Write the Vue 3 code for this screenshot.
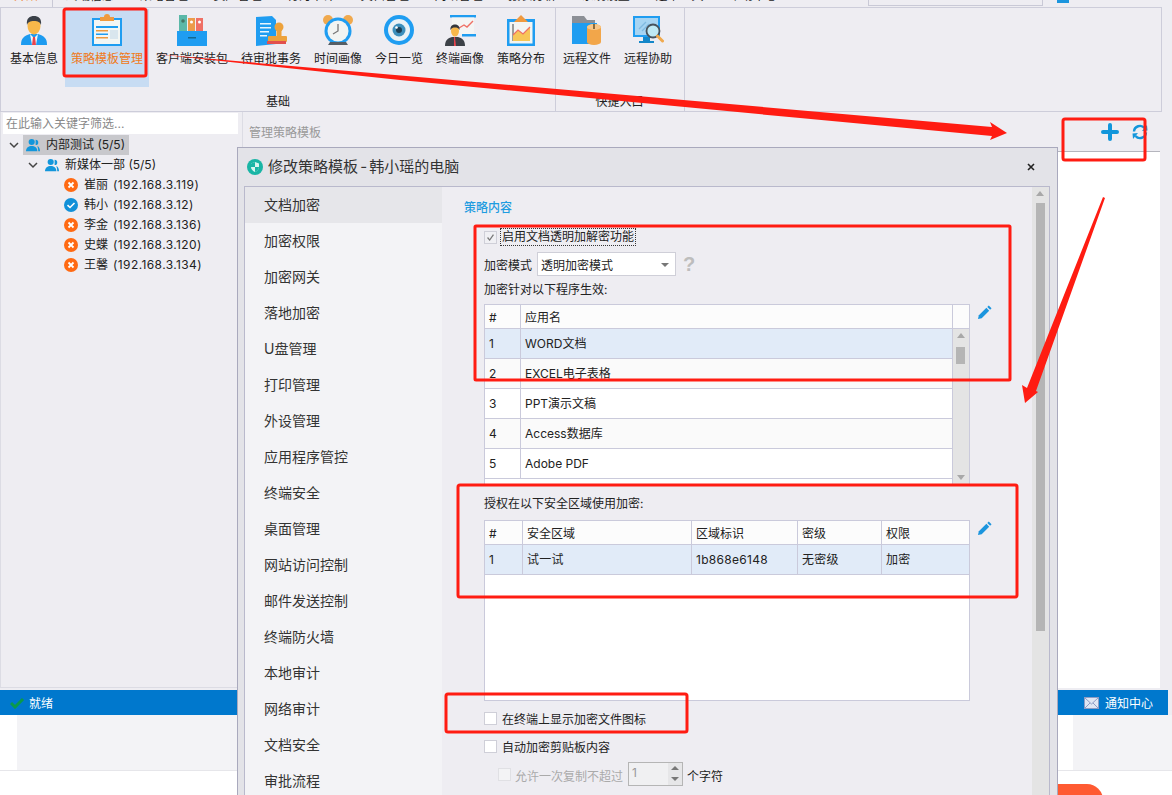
<script setup>
const tabs = ['终端信息', '策略管理', '资产管理', '行为审计', '文档管理', '网络管理', '报表分析', '系统设置', '运维工具', '帮助中心']
const groups = [
  {
    label: '基础', width: 555,
    items: [
      { t: '基本信息', i: 'person' }, { t: '策略模板管理', i: 'clip', active: true },
      { t: '客户端安装包', i: 'box' }, { t: '待审批事务', i: 'stamp' },
      { t: '时间画像', i: 'clock' }, { t: '今日一览', i: 'eye' },
      { t: '终端画像', i: 'present' }, { t: '策略分布', i: 'chart' }
    ]
  },
  {
    label: '快捷入口', width: 129,
    items: [{ t: '远程文件', i: 'folder' }, { t: '远程协助', i: 'monitor' }]
  }
]
const leaves = [
  { n: '崔丽', ip: '(192.168.3.119)', ok: false },
  { n: '韩小', ip: '(192.168.3.12)', ok: true },
  { n: '李金', ip: '(192.168.3.136)', ok: false },
  { n: '史蝶', ip: '(192.168.3.120)', ok: false },
  { n: '王馨', ip: '(192.168.3.134)', ok: false }
]
const menu = ['文档加密', '加密权限', '加密网关', '落地加密', 'U盘管理', '打印管理', '外设管理', '应用程序管控', '终端安全', '桌面管理', '网站访问控制', '邮件发送控制', '终端防火墙', '本地审计', '网络审计', '文档安全', '审批流程']
const apps = ['WORD文档', 'EXCEL电子表格', 'PPT演示文稿', 'Access数据库', 'Adobe PDF']
const zoneHead = [['#', 38], ['安全区域', 169], ['区域标识', 106], ['密级', 84], ['权限', 88]]
const zoneRow = [['1', 38], ['试一试', 169], ['1b868e6148', 106], ['无密级', 84], ['加密', 88]]
</script>

<template>
  <div class="page">
    <div class="tabstrip">
      <div class="tab-first"><span>开始</span></div>
      <div class="tab-list">
        <span v-for="t in tabs" :key="t" class="tab">{{ t }}</span>
      </div>
      <div class="strip-box"></div>
      <div class="strip-icon"></div>
    </div>

    <div class="ribbon">
      <div v-for="g in groups" :key="g.label" class="rgroup" :style="{ width: g.width + 'px' }">
        <div class="ritems">
          <div v-for="it in g.items" :key="it.t" class="ritem" :class="{ active: it.active }">
            <svg class="ricon" viewBox="0 0 32 32">
              <template v-if="it.i === 'person'">
                <path d="M3 31c0-7 3-9 9-11h8c6 2 9 4 9 11z" fill="#1d9bf0" />
                <path d="M12 20l4 4 4-4-2 11h-4z" fill="#f2f6f8" />
                <path d="M15 23h2l1 8h-4z" fill="#e8434c" />
                <ellipse cx="16" cy="12" rx="6.5" ry="8.5" fill="#f8b84a" />
                <path d="M9 11c-1-7 3-9 7-9s8 2 7 9c-1-3-3-4-7-4s-6 1-7 4z" fill="#3a4048" />
              </template>
              <template v-else-if="it.i === 'clip'">
                <rect x="1" y="4" width="30" height="28" fill="#1f9df1" />
                <rect x="3" y="6" width="26" height="24" fill="#f3f6f4" />
                <path d="M9 3h4a3 3 0 0 1 6 0h4v4H9z" fill="#f09a3e" />
                <path d="M5 12h22v2H5z" fill="#1f9df1" />
                <path d="M5 16h12v1.500H5zM5 23h12v1.500H5z" fill="#f09a3e" />
                <path d="M5 19.500h12V21H5z" fill="#1f9df1" />
                <path d="M19 16h8v9h-8z" fill="#d9e6ee" />
              </template>
              <template v-else-if="it.i === 'box'">
                <rect x="3" y="1" width="8" height="20" fill="#5bb8a8" />
                <rect x="12" y="4" width="7" height="17" fill="#ec9b4a" />
                <rect x="20" y="4" width="7" height="17" fill="#ef7065" />
                <circle cx="7" cy="7" r="1.800" fill="#476" />
                <circle cx="15.500" cy="8" r="1.500" fill="#fff" />
                <circle cx="23.500" cy="8" r="1.500" fill="#fff" />
                <rect x="1" y="17" width="30" height="15" fill="#1f9df1" />
                <rect x="12" y="23" width="8" height="1.500" fill="#14688f" />
              </template>
              <template v-else-if="it.i === 'stamp'">
                <path d="M1 3l16-1 4 4v24l-20 2z" fill="#1f9df1" />
                <path d="M5 9h11v1.500H5zM5 13h11v1.500H5zM5 17h9v1.500H5zM5 21h7v1.500H5z" fill="#e9f5fd" />
                <circle cx="24" cy="13" r="4.500" fill="#eda23c" />
                <rect x="21.500" y="15" width="5" height="8" fill="#eda23c" />
                <rect x="13" y="22" width="19" height="6" rx="1" fill="#eda23c" />
                <rect x="12" y="27" width="19" height="3" fill="#e2504e" />
              </template>
              <template v-else-if="it.i === 'clock'">
                <circle cx="6" cy="6" r="5" fill="#f0a94e" />
                <circle cx="26" cy="6" r="5" fill="#f0a94e" />
                <circle cx="16" cy="17" r="13.500" fill="#1f9df1" />
                <circle cx="16" cy="17" r="10.500" fill="#f2f4f2" />
                <path d="M16 10v7l-5 3" fill="none" stroke="#777" stroke-width="1.300" />
                <path d="M6 31h20l-2-3H8z" fill="#555e66" />
              </template>
              <template v-else-if="it.i === 'eye'">
                <circle cx="16" cy="16" r="15" fill="#1f9df1" />
                <circle cx="16" cy="16" r="11" fill="#eaf2f6" />
                <circle cx="16" cy="16" r="6.500" fill="#3c8fbc" />
                <circle cx="16" cy="16" r="3" fill="#1c3f55" />
                <circle cx="13.500" cy="13.500" r="1.300" fill="#fff" />
              </template>
              <template v-else-if="it.i === 'present'">
                <rect x="6" y="1" width="26" height="2.500" fill="#1f9df1" />
                <rect x="8" y="3.500" width="22" height="17" fill="#f4f5f4" />
                <rect x="18" y="20" width="14" height="2.500" fill="#1f9df1" />
                <path d="M15 14l5-3 3 2 6-6" fill="none" stroke="#ef7065" stroke-width="1.400" />
                <path d="M1 32c0-6 3-8 7-9h6c4 1 7 3 7 9z" fill="#3c4147" />
                <path d="M10 23l1 0 1 9-2 0z" fill="#e8434c" />
                <ellipse cx="11" cy="17" rx="4" ry="5.500" fill="#f8b84a" />
                <path d="M6.500 16c-.5-4 2-5.500 4.500-5.500s5 1.500 4.500 5.500c-1-2-2.500-2.500-4.500-2.500s-3.500.5-4.500 2.500z" fill="#33373c" />
              </template>
              <template v-else-if="it.i === 'chart'">
                <rect x="2" y="5" width="28" height="27" fill="#1f9df1" />
                <rect x="4.500" y="8" width="23" height="21.500" fill="#f3f5f2" />
                <path d="M8 27V10" stroke="#444" stroke-width="1" />
                <path d="M8 27v-6l5-5 5 4 7-7v14z" fill="#f7c657" />
                <path d="M8 21l5-5 5 4 7-7" fill="none" stroke="#ef7065" stroke-width="1.200" />
                <path d="M9 8l7-7 7 7z" fill="#f09a3e" />
              </template>
              <template v-else-if="it.i === 'folder'">
                <path d="M1 2h12l3 4h8v24H1z" fill="#8c8f96" />
                <path d="M1 9h25v21H1z" fill="#1f9df1" />
                <path d="M16 13a7 3 0 0 1 14 0v15a7 3 0 0 1-14 0z" fill="#f2a64a" />
                <ellipse cx="23" cy="13" rx="7" ry="3" fill="#f7c78a" />
                <rect x="22" y="10" width="2" height="5" fill="#8a6a3c" />
              </template>
              <template v-else>
                <rect x="1" y="2" width="27" height="21" fill="#1f9df1" />
                <rect x="3" y="4" width="23" height="17" fill="#a6d4f2" />
                <path d="M7 15l7-7M10 17l7-7" stroke="#7fb9e0" stroke-width="1.300" />
                <path d="M11 23h7v4h4v2H7v-2h4z" fill="#1487c9" />
                <circle cx="21" cy="17" r="6.500" fill="#bfe9f4" stroke="#47525c" stroke-width="1.800" />
                <path d="M25.500 22l5 5" stroke="#f0a94e" stroke-width="3" stroke-linecap="round" />
              </template>
            </svg>
            <span class="rtext">{{ it.t }}</span>
          </div>
        </div>
        <div class="rlabel">{{ g.label }}</div>
      </div>
    </div>

    <div class="main">
      <aside class="left">
        <div class="search">在此输入关键字筛选...</div>
        <div class="tree">
          <div class="node lv0">
            <svg class="chev" viewBox="0 0 10 10"><path d="M1 3l4 4 4-4" fill="none" stroke="#444" stroke-width="1.500" /></svg>
            <div class="tsel">
              <svg class="ticon" viewBox="0 0 16 16"><circle cx="6.500" cy="4.500" r="3.500" fill="#1296db" /><path d="M0 15c0-4 3-6 6.500-6s6.500 2 6.500 6z" fill="#1296db" /><path d="M11 2a3 3 0 0 1 0 6zM13 9c2 1 3 3 3 6h-2c0-2-.4-4-1-6z" fill="#1296db" /></svg>
              <span class="tname">内部测试 (5/5)</span>
            </div>
          </div>
          <div class="node lv1">
            <svg class="chev" viewBox="0 0 10 10"><path d="M1 3l4 4 4-4" fill="none" stroke="#444" stroke-width="1.500" /></svg>
            <svg class="ticon" viewBox="0 0 16 16"><circle cx="6.500" cy="4.500" r="3.500" fill="#1296db" /><path d="M0 15c0-4 3-6 6.500-6s6.500 2 6.500 6z" fill="#1296db" /><path d="M11 2a3 3 0 0 1 0 6zM13 9c2 1 3 3 3 6h-2c0-2-.4-4-1-6z" fill="#1296db" /></svg>
            <span class="tname">新媒体一部 (5/5)</span>
          </div>
          <div v-for="l in leaves" :key="l.n" class="node lv2">
            <svg class="sicon" viewBox="0 0 14 14">
              <circle cx="7" cy="7" r="7" :fill="l.ok ? '#1190d8' : '#ff6a13'" />
              <path v-if="l.ok" d="M3.500 7.200l2.500 2.300 4.500-4.500" fill="none" stroke="#fff" stroke-width="1.600" />
              <path v-else d="M4.500 4.500l5 5M9.500 4.500l-5 5" stroke="#fff" stroke-width="1.800" />
            </svg>
            <span class="tname">{{ l.n }}</span>
            <span class="tname ip">{{ l.ip }}</span>
          </div>
        </div>
      </aside>
      <section class="right">
        <div class="rhead">
          <span class="rtitle">管理策略模板</span>
          <svg class="plus" viewBox="0 0 18 18"><path d="M9 2v14M2 9h14" stroke="#1296db" stroke-width="4" stroke-linecap="round" /></svg>
          <svg class="refresh" viewBox="0 0 16 16">
            <path d="M2 7.500a6 6 0 0 1 10.500-3.500" fill="none" stroke="#1296db" stroke-width="2.400" />
            <path d="M10 7l5.500-.5L15 1z" fill="#1296db" />
            <path d="M14 8.500a6 6 0 0 1-10.500 3.500" fill="none" stroke="#1296db" stroke-width="2.400" />
            <path d="M6 9l-5.500.5.500 5.500z" fill="#1296db" />
          </svg>
        </div>
        <div class="rbody"></div>
      </section>
    </div>

    <div class="status">
      <svg class="okmark" viewBox="0 0 15 12"><path d="M1 6l4 4 8-8" fill="none" stroke="#0a9a4a" stroke-width="3" /></svg>
      <span class="stext">就绪</span>
      <span class="grow"></span>
      <svg class="mail" viewBox="0 0 15 12"><rect x=".5" y=".5" width="14" height="11" fill="#dfe6f3" stroke="#8d9cc4" /><path d="M1 1l6.500 6L14 1M1 11l5-5M14 11L9 6" fill="none" stroke="#8d9cc4" /></svg>
      <span class="stext notice">通知中心</span>
    </div>

    <div class="footer">
      <div class="foot-a"></div>
      <div class="foot-b"></div>
      <div class="foot-c"></div>
      <div class="foot-d"></div>
    </div>
    <div class="bottom">
      <div class="pill"></div>
    </div>

    <div class="dialog">
      <div class="dtitle">
        <svg class="shield" viewBox="0 0 16 16">
          <circle cx="8" cy="8" r="8" fill="#19b5a5" />
          <path d="M8 3l4 1.500V8c0 2.500-2 4-4 5-2-1-4-2.500-4-5V4.500z" fill="#d8f5f0" />
          <path d="M8 3v5H4V4.500zM8 8h4c0 2.500-2 4-4 5z" fill="#19b5a5" />
        </svg>
        <span class="dname">修改策略模板 - 韩小瑶的电脑</span>
        <svg class="close" viewBox="0 0 8 8"><path d="M1 1l6 6M7 1L1 7" stroke="#222" stroke-width="1.600" /></svg>
      </div>
      <div class="dbody">
        <nav class="dmenu">
          <div v-for="(m, i) in menu" :key="m" class="mitem" :class="{ on: i === 0 }">{{ m }}</div>
        </nav>
        <div class="dmain">
          <div class="grip"></div>
          <div class="dcontent">
            <div class="sect">策略内容</div>
            <div class="ind">
              <div class="chkrow first">
                <span class="chk checked"><svg viewBox="0 0 13 13"><path d="M3 6.500l2.500 3L10 3" fill="none" stroke="#777" stroke-width="1.500" /></svg></span>
                <span class="focus">启用文档透明加解密功能</span>
              </div>
              <div class="moderow">
                <span class="modelabel">加密模式</span>
                <div class="select">透明加密模式<i class="caret"></i></div>
                <span class="help">?</span>
              </div>
              <div class="line scope">加密针对以下程序生效:</div>
              <div class="tablewrap">
                <div class="table t1">
                  <div class="thead">
                    <div class="c c1">#</div>
                    <div class="c c2">应用名</div>
                    <div class="c c3"></div>
                  </div>
                  <div class="tbody">
                    <div class="rows">
                      <div v-for="(a, i) in apps" :key="a" class="row" :class="{ cur: i === 0, alt: i % 2 === 1 }">
                        <div class="c c1">{{ i + 1 }}</div>
                        <div class="c c2b">{{ a }}</div>
                      </div>
                    </div>
                    <div class="vbar">
                      <i class="up"></i>
                      <i class="vthumb"></i>
                      <i class="down"></i>
                    </div>
                  </div>
                </div>
                <svg class="pencil" viewBox="0 0 16 16"><path d="M1 15l1-4 8-8 3 3-8 8z" fill="#1b95de" /><path d="M11 2l1.500-1.500 3 3L14 5z" fill="#1b95de" /></svg>
              </div>
              <div class="line zonetitle">授权在以下安全区域使用加密:</div>
              <div class="tablewrap">
                <div class="table t2">
                  <div class="thead">
                    <div v-for="h in zoneHead" :key="h[0]" class="c" :style="{ width: h[1] + 'px' }">{{ h[0] }}</div>
                  </div>
                  <div class="row cur one">
                    <div v-for="h in zoneRow" :key="h[0]" class="c" :style="{ width: h[1] + 'px' }">{{ h[0] }}</div>
                  </div>
                </div>
                <svg class="pencil" viewBox="0 0 16 16"><path d="M1 15l1-4 8-8 3 3-8 8z" fill="#1b95de" /><path d="M11 2l1.500-1.500 3 3L14 5z" fill="#1b95de" /></svg>
              </div>
              <div class="chkrow showicon"><span class="chk"></span><span class="lbl">在终端上显示加密文件图标</span></div>
              <div class="chkrow auto"><span class="chk"></span><span class="lbl">自动加密剪贴板内容</span></div>
              <div class="limit">
                <span class="chk dis"></span>
                <span class="distext">允许一次复制不超过</span>
                <div class="spin"><span>1</span><div class="spinbtns"><b class="sup"></b><b class="sdn"></b></div></div>
                <span class="unit">个字符</span>
              </div>
            </div>
          </div>
          <div class="dscroll"><i class="up"></i><i class="dthumb"></i></div>
        </div>
      </div>
    </div>

    <svg class="marks" viewBox="0 0 1172 795">
      <g fill="none" stroke="#ff1c12" stroke-width="3" stroke-linejoin="round">
        <rect x="64" y="9" width="82" height="67" rx="2" />
        <rect x="1063" y="119" width="82" height="41" rx="2" />
        <rect x="475" y="226" width="535" height="154" rx="1" />
        <rect x="458" y="485" width="559" height="112" rx="2" />
        <rect x="446" y="694" width="241" height="38" rx="2" />
      </g>
      <g fill="#ff1c12">
        <path d="M155 54L992 127L990 122L1007 133L990 140L992 136L800 118L400 80Z" />
        <path d="M1105 198L1036 391L1038 392L1025 403L1022 385L1027 388L1103 197Z" />
      </g>
    </svg>
  </div>
</template>

<style>
html, body { margin: 0; background: #eeedf2; }
</style>

<style scoped>
.page {
  position: relative;
  width: 1172px;
  height: 795px;
  overflow: hidden;
  display: flex;
  flex-direction: column;
  background: #eeedf2;
  color: #222;
  font: 12px/18px Inter, "Noto Sans CJK SC", "Noto Sans", sans-serif;
}
.tabstrip { height: 7px; display: flex; overflow: hidden; flex: none; }
.tab-first { width: 53px; border-right: 1px solid #c9c9d6; box-sizing: border-box; padding-left: 14px; color: #f07a1a; }
.tab-first span, .tab { position: relative; top: -13px; display: block; }
.tab-list { display: flex; width: 815px; padding-left: 13px; box-sizing: border-box; overflow: hidden; }
.tab { width: 73.700px; flex: none; }
.strip-box { width: 175px; height: 6px; box-sizing: border-box; border: 1px solid #c9c9d6; border-top: 0; }
.strip-icon { width: 12px; height: 3px; margin-left: 14px; background: #1b95de; }
.ribbon {
  height: 105px;
  width: 1162px;
  flex: none;
  box-sizing: border-box;
  border: 1px solid #cdcdda;
  display: flex;
}
.rgroup {
  display: flex;
  flex-direction: column;
  box-sizing: border-box;
  border-right: 1px solid #cdcdda;
  flex: none;
}
.rgroup:first-child { padding: 0 3px; }
.rgroup:last-child { padding: 0 2px 0 1px; }
.ritems { display: flex; gap: 1px; height: 79px; padding-top: 1px; }
.ritem {
  padding: 5px 6px 0;
  display: flex;
  flex-direction: column;
  align-items: center;
  height: 78px;
  box-sizing: border-box;
}
.ritem.active { background: #c7dcf3; }
.ritem.active .rtext { color: #f07a1a; }
.ricon { width: 32px; height: 32px; display: block; }
.rtext { margin-top: 4px; white-space: nowrap; }
.rlabel { text-align: center; margin-top: 5px; }
.main { display: flex; height: 578px; flex: none; }
.left { width: 240px; flex: none; height: 576px; box-sizing: border-box; border: 1px solid #dcdce4; border-top: 0; border-right: 0; }
.search { margin: 1px 2px 0 2px; height: 21px; background: #fff; color: #888; line-height: 22px; padding-left: 3px; }
.tree { padding-top: 1px; }
.node { height: 20px; display: flex; align-items: flex-start; white-space: nowrap; }
.tname { padding-top: 1px; }
.lv0 { padding-left: 8px; }
.lv1 { padding-left: 27px; }
.lv1 .chev { margin-right: 7px; }
.lv2 { padding-left: 63px; }
.chev { width: 10px; height: 10px; flex: none; margin: 5px 4px 0 0; }
.tsel { display: flex; align-items: flex-start; background: #c8c8cc; height: 20px; padding-right: 4px; padding-left: 3px; }
.ticon, .sicon { width: 14px; height: 14px; margin: 3px 6px 0 0; flex: none; }
.ip { margin-left: 5px; letter-spacing: .4px; }
.right { width: 918px; flex: none; height: 576px; margin-left: 2px; box-sizing: border-box; border-left: 1px solid #dcdce4; display: flex; flex-direction: column; }
.rhead { height: 40px; flex: none; box-sizing: border-box; border-bottom: 1px solid #b5b5bd; display: flex; align-items: center; padding-left: 6px; padding-right: 12px; }
.rtitle { color: #999; flex: 1; padding-top: 2px; }
.plus { width: 18px; height: 18px; margin-right: 13px; }
.refresh { width: 16px; height: 16px; }
.rbody { flex: 1; background: #fff; }
.status { height: 25px; flex: none; width: 1168px; background: #0078cd; color: #fff; display: flex; align-items: center; padding-left: 10px; box-sizing: border-box; }
.stext { padding-top: 2px; }
.okmark { width: 15px; height: 12px; margin-right: 4px; }
.grow { flex: 1; }
.mail { width: 15px; height: 12px; margin-right: 6px; }
.notice { margin-right: 15px; }
.footer { height: 56px; flex: none; display: flex; box-sizing: border-box; border-bottom: 1px solid #e6e6ea; }
.foot-a { width: 17px; background: #fff; }
.foot-b { width: 1041px; background: #f3f3f6; }
.foot-c { width: 15px; background: #fff; }
.foot-d { flex: 1; background: #f3f3f6; }
.bottom { flex: 1; background: #fff; padding-left: 1058px; padding-top: 13px; }
.pill { width: 45px; height: 20px; background: #ff5a32; border-top-right-radius: 16px; }

.dialog {
  position: absolute;
  left: 237px;
  top: 147px;
  width: 821px;
  height: 660px;
  box-sizing: border-box;
  border: 1px solid #a9a9bd;
  background: #e3e3e8;
}
.dtitle { height: 38px; display: flex; align-items: center; padding-left: 9px; }
.shield { width: 16px; height: 16px; margin-right: 5px; }
.dname { font-size: 15px; word-spacing: -2px; flex: 1; color: #333; }
.close { width: 8px; height: 8px; margin-right: 22px; }
.dbody { display: flex; margin-left: 6px; width: 806px; height: 620px; box-sizing: border-box; border: 1px solid #b9b9cc; border-bottom: 0; }
.dmenu { width: 197px; flex: none; background: #f3f3f6; }
.mitem { height: 36px; line-height: 35px; padding-left: 19px; font-size: 14px; color: #333; }
.mitem.on { background: #e6e6ea; }
.dmain { flex: 1; display: flex; background: #eeedf2; position: relative; }
.grip { position: absolute; left: 4px; top: 316px; width: 6px; height: 17px; background-image: radial-gradient(#999 .6px, transparent .7px); background-size: 2px 2px; }
.dcontent { flex: 1; padding: 12px 0 0 22px; }
.sect { color: #1f9ce0; font-weight: 500; }
.ind { margin-left: 20px; }
.chkrow { display: flex; align-items: center; height: 18px; }
.chkrow.first { margin-top: 11px; }
.chk { width: 13px; height: 13px; flex: none; background: #fff; box-sizing: border-box; border: 1px solid #cfcfd8; display: inline-block; }
.chk svg { display: block; width: 11px; height: 11px; }
.chk.checked { background: #f0f0f4; }
.focus { margin-left: 4px; outline: 1px dotted #333; padding: 0 1px; line-height: 16px; }
.lbl { margin-left: 5px; padding-top: 4px; }
.moderow { display: flex; align-items: center; height: 24px; margin-top: 6px; }
.modelabel { padding-top: 4px; }
.select { width: 139px; height: 24px; line-height: 26px; margin-left: 5px; box-sizing: border-box; border: 1px solid #cfcfd8; background: #fff; padding-left: 3px; position: relative; }
.caret { position: absolute; right: 6px; top: 10px; border: 4px solid transparent; border-top: 4px solid #777; border-bottom: 0; }
.help { margin-left: 7px; font: bold 20px/24px "Liberation Sans", sans-serif; color: #bdbdbd; }
.line { height: 18px; line-height: 20px; }
.scope { margin-top: 4px; }
.tablewrap { display: flex; align-items: flex-start; margin-top: 6px; }
.table { width: 486px; height: 181px; box-sizing: border-box; border: 1px solid #cacadb; background: #fff; overflow: hidden; flex: none; }
.thead { display: flex; height: 23px; background: #fcfcfc; border-bottom: 1px solid #cacadb; }
.thead .c { line-height: 25px; }
.c { box-sizing: border-box; border-right: 1px solid #cacadb; padding-left: 4px; height: 100%; flex: none; line-height: 29px; overflow: hidden; }
.c:last-child { border-right: 0; }
.c1 { width: 36px; }
.c2 { width: 432px; }
.c3 { width: 15px; }
.c2b { flex: 1; padding-left: 4px; }
.tbody { display: flex; height: 156px; }
.rows { width: 467px; flex: none; }
.row { display: flex; height: 30px; box-sizing: border-box; border-bottom: 1px solid #cacadb; background: #fff; }
.row.one .c { letter-spacing: .3px; }
.row.alt { background: #fafafa; }
.row.cur { background: #e1ebf8; }
.vbar { flex: 1; background: #e4e4e4; position: relative; border-left: 1px solid #cacadb; }
.up, .down { position: absolute; left: 50%; margin-left: -4.500px; width: 0; height: 0; border: 4.500px solid transparent; }
.up { top: 4px; border-top: 0; border-bottom: 5px solid #a8a8a8; }
.down { bottom: 5px; border-bottom: 0; border-top: 5px solid #a8a8a8; }
.vthumb { position: absolute; left: 3px; top: 18px; width: 9px; height: 17px; background: #b5b5b5; }
.pencil { width: 15px; height: 15px; margin-left: 7px; margin-top: 1px; flex: none; }
.zonetitle { margin-top: 9px; }
.zonetitle + .tablewrap { margin-top: 8px; }
.showicon { margin-top: 8px; }
.auto { margin-top: 10px; }
.limit { display: flex; align-items: center; height: 24px; margin-top: 7px; margin-left: 14px; }
.chk.dis { background: #f3f3f5; border-color: #e0e0e4; }
.distext { color: #aaa; margin-left: 4px; padding-top: 5px; }
.unit { padding-top: 5px; }
.spin { width: 55px; height: 24px; margin: 0 4px 0 5px; box-sizing: border-box; border: 1px solid #b5b5b5; background: #f0f0f2; color: #999; padding-left: 3px; display: flex; justify-content: space-between; line-height: 20px; }
.spinbtns { width: 14px; display: flex; flex-direction: column; background: #e6e6e8; }
.spinbtns b { flex: 1; position: relative; }
.sup::after, .sdn::after { content: ""; position: absolute; left: 3px; top: 3px; border: 4px solid transparent; }
.sup::after { border-top: 0; border-bottom: 4px solid #777; }
.sdn::after { border-bottom: 0; border-top: 4px solid #777; }
.dscroll { width: 17px; flex: none; background: #e4e4e4; position: relative; }
.dscroll .up { top: 4px; }
.dthumb { position: absolute; left: 4px; top: 16px; width: 9px; height: 428px; background: #b5b5b5; }
.marks { position: absolute; left: 0; top: 0; width: 1172px; height: 795px; pointer-events: none; }
</style>
